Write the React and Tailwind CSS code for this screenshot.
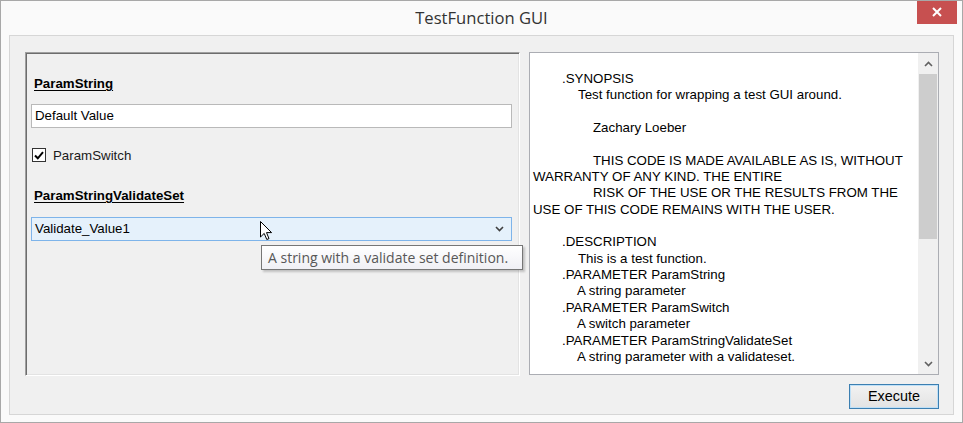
import React from 'react';

const helpLines = [
  { text: '.SYNOPSIS', indent: 'pl-[29px]' },
  { text: 'Test function for wrapping a test GUI around.', indent: 'pl-[45px]' },
  { text: '', indent: '' },
  { text: 'Zachary Loeber', indent: 'pl-[60px]' },
  { text: '', indent: '' },
  { text: 'THIS CODE IS MADE AVAILABLE AS IS, WITHOUT', indent: 'pl-[60px]' },
  { text: 'WARRANTY OF ANY KIND. THE ENTIRE', indent: '' },
  { text: 'RISK OF THE USE OR THE RESULTS FROM THE', indent: 'pl-[60px]' },
  { text: 'USE OF THIS CODE REMAINS WITH THE USER.', indent: '' },
  { text: '', indent: '' },
  { text: '.DESCRIPTION', indent: 'pl-[29px]' },
  { text: 'This is a test function.', indent: 'pl-[45px]' },
  { text: '.PARAMETER ParamString', indent: 'pl-[29px]' },
  { text: 'A string parameter', indent: 'pl-[44px]' },
  { text: '.PARAMETER ParamSwitch', indent: 'pl-[29px]' },
  { text: 'A switch parameter', indent: 'pl-[44px]' },
  { text: '.PARAMETER ParamStringValidateSet', indent: 'pl-[29px]' },
  { text: 'A string parameter with a validateset.', indent: 'pl-[44px]' },
];

function Chevron({ up = false, className = '' }) {
  return (
    <svg width="9" height="6" viewBox="0 0 9 6" className={className}>
      <path
        d={up ? 'M1 5 L4.5 1.5 L8 5' : 'M1 1 L4.5 4.5 L8 1'}
        fill="none"
        stroke="currentColor"
        strokeWidth="1.6"
      />
    </svg>
  );
}

function ParamLabel({ children }) {
  return (
    <div className="pl-[3px] h-[16px] leading-[16px] text-[13.3px] font-bold underline underline-offset-[2px] text-black">
      {children}
    </div>
  );
}

function Cursor() {
  return (
    <svg width="13" height="20" viewBox="0 0 13 20" className="absolute left-[259px] top-[220px]">
      <path
        d="M0.5 0.5 L0.5 16 L4.2 12.4 L6.8 18.5 L9 17.6 L6.5 11.6 L11.6 11.6 Z"
        fill="#fff"
        stroke="#000"
        strokeWidth="1"
        strokeLinejoin="round"
      />
    </svg>
  );
}

export default function App() {
  return (
    <div className="relative w-[963px] h-[423px] overflow-hidden bg-[#fafafa] border border-[#a8a8a8] flex flex-col font-['Liberation_Sans',Arial,sans-serif] text-black">
      {/* title bar */}
      <div className="h-[34px] grid grid-cols-[1fr_auto_1fr] items-start">
        <div />
        <div className="pt-[6px] text-[16.6px] leading-[22px] text-[#333] font-['Open_Sans',sans-serif]">
          TestFunction GUI
        </div>
        <div className="flex justify-end pr-[5px]">
          <div className="w-[40px] h-[24px] -mt-px bg-[#c75050] flex items-center justify-center">
            <svg width="10" height="10" viewBox="0 0 10 10">
              <path d="M1 1 L9 9 M9 1 L1 9" stroke="#fff" strokeWidth="2" />
            </svg>
          </div>
        </div>
      </div>

      {/* client area */}
      <div className="mx-[8px] h-[380px] bg-[#f0f0f0] border border-[#d6d6d6] pl-[15px] pt-[16px] flex flex-col">
        <div className="flex gap-[9px]">
          {/* parameter panel */}
          <div className="w-[495px] h-[324px] border border-t-[#a0a0a0] border-l-[#a0a0a0] border-b-white border-r-white shadow-[inset_1px_1px_0_#6d6d6d,inset_-1px_-1px_0_#e3e3e3] pt-[23px] pl-[5px]">
            <ParamLabel>ParamString</ParamLabel>
            <div className="mt-[12px] w-[481px] h-[24px] bg-white border border-[#b9b9b9] pl-[3px] flex items-center text-[13.3px]">
              Default Value
            </div>

            <div className="mt-[20px] h-[14px] flex items-center gap-[7px] pl-[1px]">
              <div className="w-[14px] h-[14px] border border-[#333] bg-white flex items-center justify-center">
                <svg width="10" height="9" viewBox="0 0 10 9">
                  <path d="M1 4.5 L3.8 7.3 L9 1.2" fill="none" stroke="#000" strokeWidth="2" />
                </svg>
              </div>
              <span className="pt-[2px] text-[13.3px] leading-[16px] text-[#1a1a1a]">ParamSwitch</span>
            </div>

            <div className="mt-[26px]">
              <ParamLabel>ParamStringValidateSet</ParamLabel>
            </div>
            <div className="mt-[13px] w-[481px] h-[24px] bg-[#e5f1fb] border border-[#7eb4ea] pl-[3px] pr-[7px] flex items-center justify-between text-[13.3px]">
              <span>Validate_Value1</span>
              <Chevron className="text-[#404040]" />
            </div>
          </div>

          {/* help text box */}
          <div className="w-[410px] h-[323px] bg-white border border-[#abadb3] flex">
            <div className="flex-1 pt-[18px] pl-[3px] text-[13.3px] leading-[16.35px] whitespace-nowrap">
              {helpLines.map((l, i) => (
                <div key={i} className={`h-[16.35px] ${l.indent}`}>
                  {l.text}
                </div>
              ))}
            </div>
            <div className="w-[20px] bg-[#f0f0f0] flex flex-col items-stretch">
              <div className="h-[21px] flex items-center justify-center text-[#606060]">
                <Chevron up />
              </div>
              <div className="mx-[1px] h-[165px] bg-[#cdcdcd]" />
              <div className="flex-1" />
              <div className="h-[21px] flex items-center justify-center text-[#606060]">
                <Chevron />
              </div>
            </div>
          </div>
        </div>

        <div className="mt-[8px] flex justify-end pr-[14px]">
          <div className="w-[90px] h-[25px] border border-[#3c7fb1] shadow-[inset_0_0_0_1px_#bfe0f7] bg-gradient-to-b from-[#f2f2f2] to-[#e3e3e3] flex items-center justify-center text-[14.4px]">
            Execute
          </div>
        </div>
      </div>

      {/* tooltip */}
      <div className="absolute left-[260px] top-[244px] w-[262px] h-[25px] bg-gradient-to-b from-white to-[#f0f0f5] border border-[#767676] shadow-[2px_2px_2px_rgba(0,0,0,0.2)] pl-[6px] flex items-center text-[14px] text-[#575757] font-['Open_Sans',sans-serif] whitespace-nowrap">
        A string with a validate set definition.
      </div>

      <Cursor />
    </div>
  );
}
